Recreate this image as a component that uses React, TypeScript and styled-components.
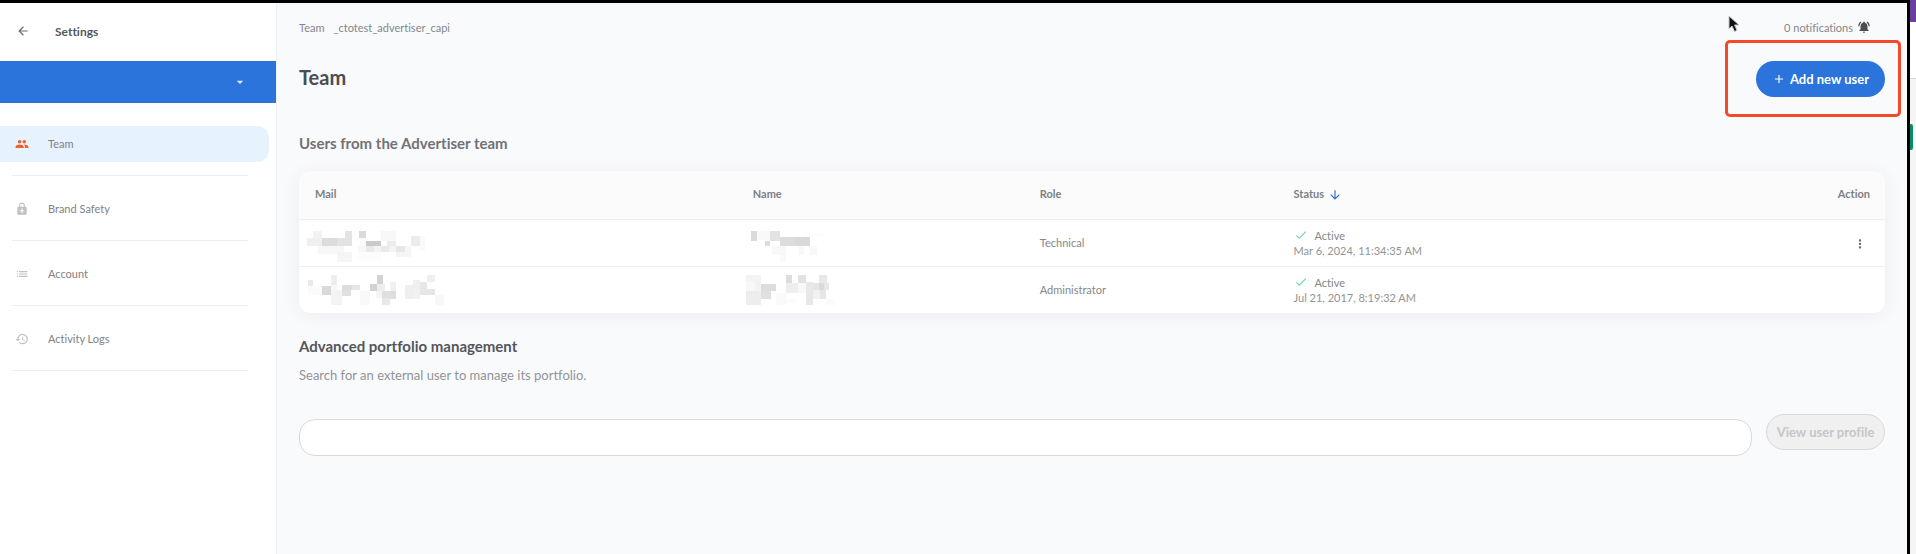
import React from "react";
import styled, { createGlobalStyle } from "styled-components";
import {
  MdAdd,
  MdArrowBack,
  MdArrowDownward,
  MdArrowDropDown,
  MdCheck,
  MdEnhancedEncryption,
  MdGroup,
  MdHistory,
  MdList,
  MdMoreVert,
  MdNotificationsActive,
} from "react-icons/md";

const GlobalStyle = createGlobalStyle`
  * { box-sizing: border-box; }
  body { margin: 0; background: #f9fafc; }
  body, button, input { font-family: Lato, "Open Sans", sans-serif; font-variant-ligatures: none; }
  h1, h2, p, ul { margin: 0; padding: 0; }
`;

const Frame = styled.div`
  display: flex;
  min-height: 100vh;
  border-top: 3px solid #000;
  position: relative;
`;

const Sidebar = styled.aside`
  flex: 0 0 277px;
  background: #fff;
  border-right: 1px solid #f1f2f4;
`;

const SidebarHeader = styled.header`
  display: flex;
  align-items: center;
  gap: 25px;
  height: 58px;
  padding: 0 0 2px 16px;
  font-size: 12px;
  font-weight: 700;
  color: #55575b;
`;

const IconButton = styled.button`
  display: inline-flex;
  padding: 0;
  border: 0;
  background: none;
  color: #6b6d70;
  font-size: 14px;
`;

const MenuButton = styled(IconButton)`
  margin-right: 3px;
  vertical-align: middle;
`;

const AccountPicker = styled.button`
  display: flex;
  align-items: center;
  justify-content: flex-end;
  width: 100%;
  height: 42px;
  padding: 0 28px;
  border: 0;
  background: #2a74db;
  color: #dcebff;
  font-size: 16px;
`;

const NavList = styled.ul`
  list-style: none;
  padding-top: 8px;
`;

const NavItem = styled.li`
  display: flex;
  align-items: center;
  height: 65px;
  position: relative;

  &::after {
    content: "";
    position: absolute;
    left: 12px;
    right: 28px;
    bottom: 0;
    border-bottom: 1px solid #ececed;
  }
`;

const NavLink = styled.a<{ $active?: boolean }>`
  display: flex;
  align-items: center;
  gap: 19px;
  flex: 1;
  height: 36px;
  margin-right: 7px;
  padding-left: 15px;
  border-radius: 0 12px 12px 0;
  background: ${(p) => (p.$active ? "#e6f2fe" : "transparent")};
  color: #808285;
  font-size: 11px;
  text-decoration: none;

  svg {
    font-size: 14px;
    color: ${(p) => (p.$active ? "#f0602c" : "#bfc0c3")};
  }
`;

const Main = styled.main`
  flex: 1;
  min-width: 0;
  padding: 10px 22px 24px;
  background: #f9fafc;
`;

const TopBar = styled.div`
  display: flex;
  align-items: center;
  justify-content: space-between;
  height: 28px;
  padding-right: 14px;
  font-size: 11px;
  color: #85878a;
`;

const Crumbs = styled.nav`
  display: flex;
  gap: 9px;
`;

const Notifications = styled.span`
  display: flex;
  align-items: center;
  gap: 4px;

  svg {
    font-size: 14px;
    color: #4c4e52;
  }
`;

const TitleRow = styled.div`
  display: flex;
  align-items: flex-start;
  justify-content: space-between;
  margin-top: 20px;
`;

const Title = styled.h1`
  font-size: 20px;
  line-height: 32px;
  font-weight: 700;
  color: #4b4d51;
`;

const SectionTitle = styled.h2<{ $strong?: boolean }>`
  font-size: 15px;
  line-height: 20px;
  font-weight: 700;
  color: ${(p) => (p.$strong ? "#54565a" : "#707276")};
`;

const Highlighted = styled.div`
  position: relative;

  &::before {
    content: "";
    position: absolute;
    inset: -21px -16px -20px -31px;
    border: 3px solid #f44a2b;
    border-radius: 5px;
    pointer-events: none;
  }
`;

const PillButton = styled.button<{ $primary?: boolean }>`
  display: inline-flex;
  align-items: center;
  justify-content: center;
  gap: 4px;
  height: 36px;
  padding: 0;
  width: ${(p) => (p.$primary ? 129 : 119)}px;
  border: ${(p) => (p.$primary ? "0" : "1px solid #d9d9da")};
  border-radius: 18px;
  background: ${(p) => (p.$primary ? "#2a74db" : "#f0f0f0")};
  color: ${(p) => (p.$primary ? "#fff" : "#c6c6c7")};
  font-size: 13px;
  font-weight: 700;
  white-space: nowrap;

  svg {
    font-size: 14px;
  }
`;

const TeamSection = styled.section`
  margin-top: 36px;
`;

const Card = styled.div`
  margin-top: 18px;
  border-radius: 12px;
  background: #fff;
  box-shadow: 0 2px 18px rgba(60, 64, 80, 0.07);
  overflow: hidden;
`;

const Table = styled.table`
  width: 100%;
  border-collapse: collapse;
  table-layout: fixed;
  font-size: 11px;
  line-height: 15px;
  color: #85878a;
`;

const Th = styled.th<{ $width?: string; $right?: boolean }>`
  width: ${(p) => p.$width ?? "auto"};
  height: 48px;
  padding: 0 15px 2px 16px;
  background: #fbfbfb;
  color: #7e8084;
  font-weight: 700;
  text-align: ${(p) => (p.$right ? "right" : "left")};

  svg {
    margin-left: 4px;
    font-size: 14px;
    color: #2a6fd6;
    vertical-align: -4px;
  }
`;

const Td = styled.td<{ $right?: boolean }>`
  height: 47px;
  padding: 0 15px 0 16px;
  border-top: 1px solid #efeff0;
  text-align: ${(p) => (p.$right ? "right" : "left")};
`;

const StatusLine = styled.div`
  display: flex;
  align-items: center;
  gap: 7px;

  svg {
    font-size: 14px;
    color: #6fd3ae;
  }
`;

const DateLine = styled.div`
  color: #929497;
`;

const Mosaic = styled.svg`
  display: block;
  margin-left: -10px;
  shape-rendering: crispEdges;
`;

const Portfolio = styled.section`
  margin-top: 23px;
`;

const Hint = styled.p`
  margin-top: 10px;
  font-size: 13px;
  line-height: 18px;
  color: #929497;
`;

const SearchRow = styled.form`
  display: flex;
  align-items: flex-start;
  gap: 14px;
  margin-top: 30px;
`;

const SearchInput = styled.input`
  flex: 1;
  min-width: 0;
  height: 37px;
  margin-top: 5px;
  padding: 0 16px;
  border: 1px solid #d8d9da;
  border-radius: 16px;
  background: #fff;
  font-size: 13px;
`;

const WindowEdge = styled.div`
  flex: 0 0 9px;
  display: flex;
  flex-direction: column;
  margin-top: -3px;
  border-left: 3px solid #000;
  background: #f5f5f5;
`;

const EdgeBlock = styled.div<{ $height: number; $color: string }>`
  height: ${(p) => p.$height}px;
  background: ${(p) => p.$color};
`;

const EdgeMarker = styled.div`
  width: 3px;
  height: 26px;
  margin-top: 45px;
  border-radius: 0 2px 2px 0;
  background: #0b8a66;
`;

const Cursor = styled.svg`
  position: absolute;
  top: 12px;
  right: 175px;
`;

type Tile = [number, number, number, number, string];

const mosaics: Record<string, Tile[]> = {
  mail1: [
    [24, 33, 27, 21, "#f2f2f2"], [120, 33, 21, 21, "#e4e4e4"], [162, 33, 21, 21, "#dadada"],
    [6, 54, 45, 24, "#efefef"], [51, 54, 45, 24, "#dcdcdc"], [96, 54, 45, 24, "#e3e3e3"],
    [39, 78, 78, 23, "#f7f7f7"], [96, 97, 45, 28, "#f5f5f5"], [228, 33, 45, 30, "#f8f8f8"],
    [165, 54, 18, 24, "#fafafa"], [183, 63, 45, 15, "#cacaca"], [246, 63, 27, 15, "#ececec"],
    [160, 78, 23, 18, "#f7f7f7"], [183, 78, 24, 18, "#e9e9e9"], [207, 78, 21, 18, "#f3f3f3"],
    [228, 78, 24, 18, "#e9e9e9"], [252, 78, 21, 18, "#f3f3f3"], [273, 78, 27, 18, "#e7e7e7"],
    [273, 96, 45, 15, "#f5f5f5"], [300, 78, 18, 18, "#f6f6f6"], [318, 48, 27, 30, "#ececec"],
    [345, 48, 15, 45, "#fafafa"], [160, 96, 68, 28, "#fcfcfc"],
  ],
  mail2: [
    [9, 38, 15, 19, "#e8e8e8"], [9, 57, 42, 26, "#fbfbfb"], [78, 24, 18, 30, "#eeeeee"],
    [51, 57, 27, 26, "#d9d9d9"], [78, 54, 18, 15, "#f7f7f7"], [78, 69, 33, 45, "#f3f3f3"],
    [111, 54, 30, 15, "#dddddd"], [111, 69, 27, 18, "#e0e0e3"], [141, 54, 24, 15, "#e6e6e6"],
    [165, 72, 30, 42, "#f9f9f9"], [195, 51, 21, 21, "#d3d3d3"], [216, 24, 18, 27, "#d3d3d3"],
    [216, 51, 24, 21, "#eeeeee"], [213, 72, 18, 21, "#f4f4f4"], [255, 45, 18, 27, "#f0f0f0"],
    [231, 72, 42, 24, "#dfdfdf"], [231, 93, 24, 21, "#e8e8e8"], [300, 54, 24, 42, "#efefef"],
    [324, 39, 21, 27, "#efefef"], [324, 66, 21, 30, "#f1f1f1"], [345, 45, 21, 39, "#e7e7e7"],
    [366, 24, 24, 21, "#efefef"], [366, 66, 24, 18, "#e6e6e6"], [390, 84, 27, 30, "#f8f8f8"],
  ],
  name1: [
    [24, 33, 18, 30, "#dbdbdb"], [42, 33, 39, 27, "#f9f9f9"], [81, 33, 30, 30, "#e3e3e3"],
    [66, 63, 15, 15, "#dcdcdc"], [111, 51, 45, 27, "#dcdcdc"], [156, 51, 45, 27, "#d9d9d9"],
    [87, 78, 42, 27, "#f8f8f8"], [111, 105, 18, 20, "#f9f9f9"], [168, 78, 15, 27, "#f8f8f8"],
    [201, 78, 21, 27, "#f8f8f8"], [183, 38, 60, 13, "#fdfdfd"],
  ],
  name2: [
    [9, 24, 45, 18, "#f3f3f3"], [9, 42, 27, 30, "#f8f8f8"], [36, 42, 18, 30, "#f3f3f3"],
    [54, 51, 45, 21, "#dddddd"], [9, 72, 45, 42, "#ededed"], [54, 72, 30, 24, "#e0e0e0"],
    [129, 24, 18, 24, "#dddddd"], [165, 24, 24, 24, "#e2e2e2"], [129, 48, 36, 30, "#eeeeee"],
    [165, 48, 24, 30, "#f8f8f8"], [189, 45, 21, 69, "#e8e8e8"], [210, 48, 18, 21, "#e5e5e5"],
    [228, 24, 24, 24, "#e8e8e8"], [228, 48, 15, 21, "#dadada"], [243, 48, 15, 21, "#e8e8e8"],
    [210, 69, 21, 27, "#f1f1f1"], [231, 69, 18, 27, "#e6e6e6"], [99, 78, 30, 36, "#fafafa"],
    [249, 96, 27, 18, "#fafafa"], [129, 96, 30, 12, "#fcfcfc"],
  ],
};

function Redacted({ id, label }: { id: string; label: string }) {
  return (
    <Mosaic width="144" height="46" viewBox="0 0 432 138" role="img" aria-label={label}>
      {mosaics[id].map(([x, y, w, h, fill], i) => (
        <rect key={i} x={x} y={y} width={w} height={h} fill={fill} />
      ))}
    </Mosaic>
  );
}

const navItems = [
  { label: "Team", Icon: MdGroup, active: true },
  { label: "Brand Safety", Icon: MdEnhancedEncryption },
  { label: "Account", Icon: MdList },
  { label: "Activity Logs", Icon: MdHistory },
];

const users = [
  { mail: "mail1", name: "name1", role: "Technical", date: "Mar 6, 2024, 11:34:35 AM", menu: true },
  { mail: "mail2", name: "name2", role: "Administrator", date: "Jul 21, 2017, 8:19:32 AM", menu: false },
];

export default function App() {
  return (
    <>
      <GlobalStyle />
      <Frame>
        <Sidebar>
          <SidebarHeader>
            <IconButton aria-label="Back"><MdArrowBack /></IconButton>
            Settings
          </SidebarHeader>
          <AccountPicker aria-label="Choose account"><MdArrowDropDown /></AccountPicker>
          <nav aria-label="Settings">
            <NavList>
              {navItems.map(({ label, Icon, active }) => (
                <NavItem key={label}>
                  <NavLink href="#" $active={active}><Icon />{label}</NavLink>
                </NavItem>
              ))}
            </NavList>
          </nav>
        </Sidebar>

        <Main>
          <TopBar>
            <Crumbs aria-label="Breadcrumb"><span>Team</span><span>_ctotest_advertiser_capi</span></Crumbs>
            <Notifications>0 notifications <MdNotificationsActive /></Notifications>
          </TopBar>
          <TitleRow>
            <Title>Team</Title>
            <Highlighted>
              <PillButton $primary type="button"><MdAdd />Add new user</PillButton>
            </Highlighted>
          </TitleRow>

          <TeamSection>
            <SectionTitle>Users from the Advertiser team</SectionTitle>
            <Card>
              <Table>
                <thead>
                  <tr>
                    <Th $width="27.6%">Mail</Th>
                    <Th $width="18.1%">Name</Th>
                    <Th $width="16%">Role</Th>
                    <Th>Status<MdArrowDownward /></Th>
                    <Th $width="10%" $right>Action</Th>
                  </tr>
                </thead>
                <tbody>
                  {users.map((user) => (
                    <tr key={user.mail}>
                      <Td><Redacted id={user.mail} label="Hidden mail" /></Td>
                      <Td><Redacted id={user.name} label="Hidden name" /></Td>
                      <Td>{user.role}</Td>
                      <Td>
                        <StatusLine><MdCheck />Active</StatusLine>
                        <DateLine>{user.date}</DateLine>
                      </Td>
                      <Td $right>
                        {user.menu && <MenuButton aria-label="User actions"><MdMoreVert /></MenuButton>}
                      </Td>
                    </tr>
                  ))}
                </tbody>
              </Table>
            </Card>
          </TeamSection>

          <Portfolio>
            <SectionTitle $strong>Advanced portfolio management</SectionTitle>
            <Hint id="search-hint">Search for an external user to manage its portfolio.</Hint>
            <SearchRow onSubmit={(e) => e.preventDefault()}>
              <SearchInput type="text" aria-labelledby="search-hint" />
              <PillButton type="submit" disabled>View user profile</PillButton>
            </SearchRow>
          </Portfolio>
        </Main>

        <WindowEdge>
          <EdgeBlock $height={22} $color="#6b3fa0" />
          <EdgeBlock $height={56} $color="#fff" />
          <EdgeBlock $height={1} $color="#d5d5d5" />
          <EdgeMarker />
        </WindowEdge>

        <Cursor width="13" height="18" viewBox="0 0 13 18" aria-hidden="true">
          <path d="M1 1v13l3-3 2.500 5.500 2.500-1.200L6.600 10H11z" fill="#111" stroke="#c8c8c8" strokeWidth="1" />
        </Cursor>
      </Frame>
    </>
  );
}
